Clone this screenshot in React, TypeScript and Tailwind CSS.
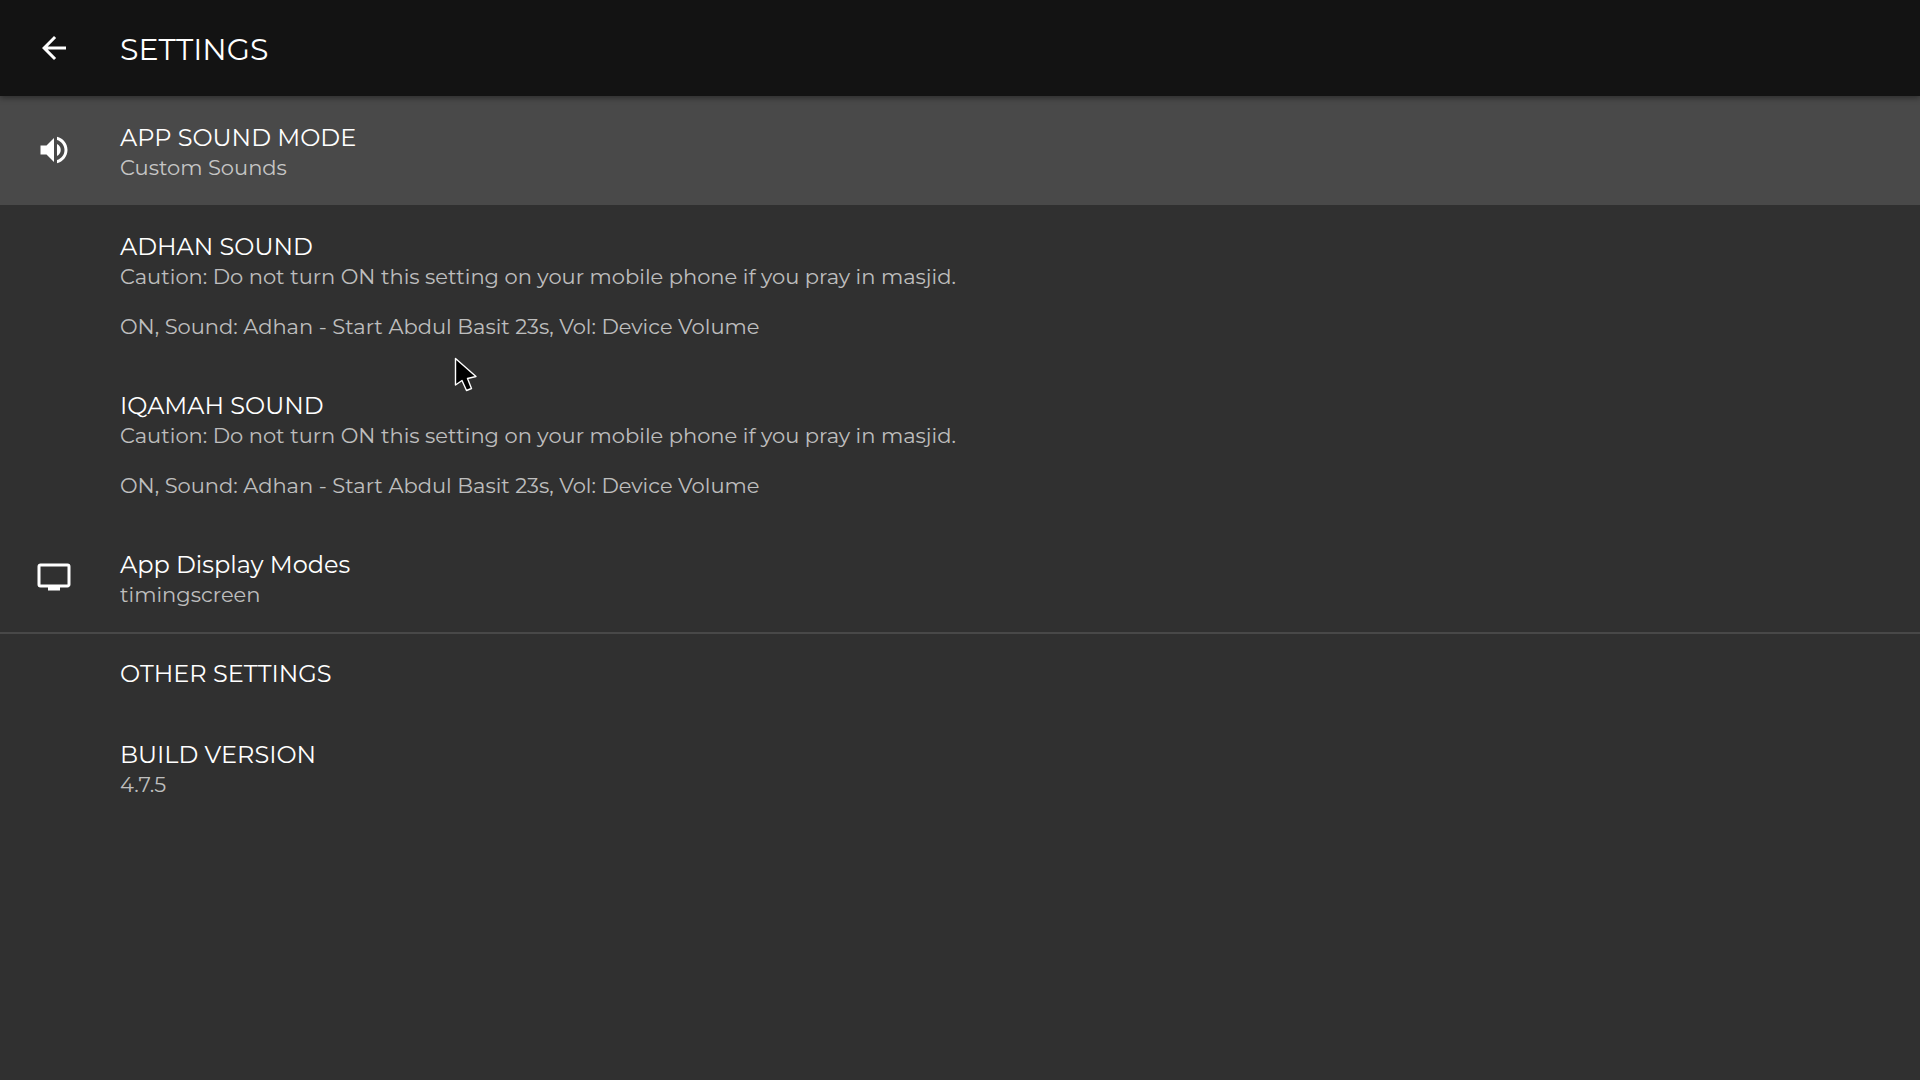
import type { ReactNode } from "react";
import { MdArrowBack, MdPersonalVideo, MdVolumeUp } from "react-icons/md";
import { cva } from "class-variance-authority";

type Setting = {
  title: string;
  subtitle?: string;
  icon?: ReactNode;
  active?: boolean;
};

const CAUTION =
  "Caution: Do not turn ON this setting on your mobile phone if you pray in masjid.";
const ADHAN = "ON, Sound: Adhan - Start Abdul Basit 23s, Vol: Device Volume";

const SOUND_SETTINGS: Setting[] = [
  {
    title: "APP SOUND MODE",
    subtitle: "Custom Sounds",
    icon: <MdVolumeUp className="size-9" />,
    active: true,
  },
  { title: "ADHAN SOUND", subtitle: `${CAUTION}\n\n${ADHAN}` },
  { title: "IQAMAH SOUND", subtitle: `${CAUTION}\n\n${ADHAN}` },
  {
    title: "App Display Modes",
    subtitle: "timingscreen",
    icon: <MdPersonalVideo className="size-9" />,
  },
];

const OTHER_SETTINGS: Setting[] = [
  { title: "OTHER SETTINGS" },
  { title: "BUILD VERSION", subtitle: "4.7.5" },
];

const tile = cva("flex w-full items-center gap-12 px-9 py-[25px] text-left", {
  variants: {
    active: {
      true: "bg-[#494949]",
      false: "hover:bg-[#383838]",
    },
  },
});

function SettingTile({ title, subtitle, icon, active = false }: Setting) {
  return (
    <li>
      <button type="button" className={tile({ active })}>
        <span className="w-9 shrink-0 pb-px">{icon}</span>
        <span className="min-w-0 flex-1 pt-0.5">
          <span className="block text-[24px] leading-[29px]">{title}</span>
          {subtitle && (
            <span className="mt-[3px] block text-[21px] leading-[25px] whitespace-pre-line text-white/70">
              {subtitle}
            </span>
          )}
        </span>
      </button>
    </li>
  );
}

function SettingList({ items }: { items: Setting[] }) {
  return (
    <ul>
      {items.map((item) => (
        <SettingTile key={item.title} {...item} />
      ))}
    </ul>
  );
}

function Pointer() {
  return (
    <svg
      aria-hidden="true"
      viewBox="0 0 28 40"
      className="pointer-events-none absolute top-[355px] left-[452px] z-20 h-10 w-7"
    >
      <path
        d="M3.5 3.5V30L10 25.5L14.5 35.5L19.5 33.5L15.5 23.5L24 21.5Z"
        fill="#000"
        stroke="#fff"
        strokeWidth="1.4"
        strokeLinejoin="round"
      />
    </svg>
  );
}

export default function App() {
  return (
    <div className="relative min-h-screen bg-[#303030] font-['Montserrat','Inter',sans-serif] text-white">
      <header className="relative z-10 flex h-24 items-center gap-12 bg-[#131313] px-9 shadow-[0_2px_6px_rgba(0,0,0,0.4)]">
        <button type="button" aria-label="Back" className="size-9 shrink-0">
          <MdArrowBack className="size-9" />
        </button>
        <h1 className="pt-1 text-[30px] leading-9">SETTINGS</h1>
      </header>
      <main>
        <SettingList items={SOUND_SETTINGS} />
        <hr className="-mb-0.5 border-t-2 border-[#484848]" />
        <SettingList items={OTHER_SETTINGS} />
      </main>
      <Pointer />
    </div>
  );
}
